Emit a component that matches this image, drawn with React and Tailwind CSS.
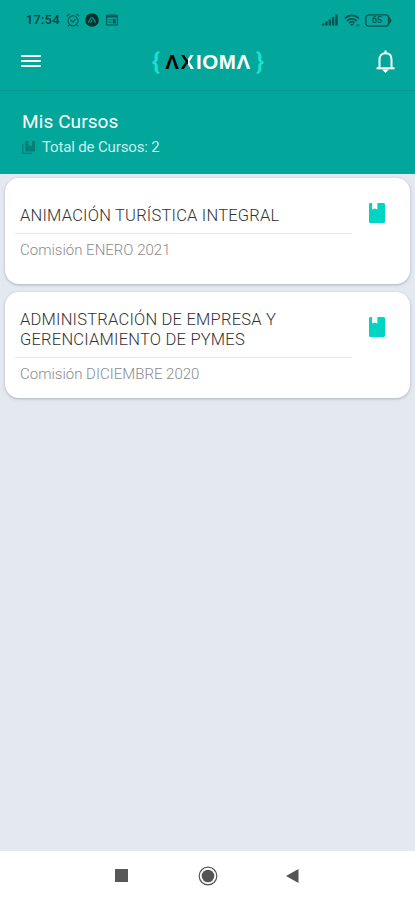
import React from 'react';

const courses = [
  {
    id: 1,
    title: ['ANIMACIÓN TURÍSTICA INTEGRAL'],
    commission: 'Comisión ENERO 2021',
  },
  {
    id: 2,
    title: ['ADMINISTRACIÓN DE EMPRESA Y', 'GERENCIAMIENTO DE PYMES'],
    commission: 'Comisión DICIEMBRE 2020',
  },
];

const BookIcon = () => (
  <svg className="w-4 h-5 text-[#00d5c5]" viewBox="0 0 16 20" fill="currentColor">
    <path d="M1.500 0H3v6.500l2.700-1L8.400 6.500V0h6.100A1.500 1.500 0 0 1 16 1.500v17a1.500 1.500 0 0 1-1.500 1.500h-13A1.500 1.500 0 0 1 0 18.500v-17A1.500 1.500 0 0 1 1.500 0z" />
  </svg>
);

const StatusBar = () => (
  <div className="flex h-10 items-center justify-between pl-[26px] pr-[23px] text-[#075450]">
    <div className="flex items-center">
      <span className="w-[35px] whitespace-nowrap text-[12.5px] font-medium tracking-[0.45px] text-[#073f3d]">17:54</span>
      {/* Alarm */}
      <svg className="ml-[5px] size-[14px]" viewBox="0 0 14 14" fill="none" stroke="currentColor" strokeWidth="1.1">
        <circle cx="7" cy="7.800" r="5" />
        <path d="M1 3.200 3.500 1M13 3.200 10.500 1M4.600 7l2.100 2 3-2.800M3 12l-1 1.300M11 12l1 1.300" />
      </svg>
      {/* App badge */}
      <svg className="ml-[5px] size-[14px]" viewBox="0 0 14 14">
        <circle cx="7" cy="7" r="6.800" fill="#063230" />
        <path d="M3.200 9.800C4.800 8.500 5 4.700 7 4.700s2.200 3.800 3.800 5.100M5.500 9.500 7 7.300" fill="none" stroke="#07998f" strokeWidth="1.200" />
      </svg>
      {/* Calendar */}
      <svg className="ml-[7px] h-[12px] w-[12px]" viewBox="0 0 12 12" fill="none" stroke="currentColor">
        <rect x="0.600" y="1" width="10.800" height="10" rx="1" strokeWidth="1.100" />
        <path d="M1 2.400h10" strokeWidth="2" />
        <path d="M2.500 5.700h3M2.500 8.200h3" strokeWidth="0.800" />
        <path d="M7 5.200h2.500v4H7z" fill="currentColor" strokeWidth="0.500" />
      </svg>
    </div>
    <div className="flex items-center">
      {/* Signal */}
      <svg className="h-[12px] w-[16px]" viewBox="0 0 16 12" fill="currentColor">
        <path d="M0 9.500h2.500V11.500H0zM3.300 7.500h2.400v4H3.300zM6.600 5.500H9v6H6.600zM9.900 3h2.400v8.500H9.900zM13.300 0.500h2.400v11h-2.400z" />
      </svg>
      {/* Wifi */}
      <svg className="ml-[6px] h-[13px] w-[16px]" viewBox="0 0 16 13" fill="none" stroke="currentColor" strokeWidth="1.700">
        <path d="M0.800 4.300a10 10 0 0 1 14 0M3 6.800a7 7 0 0 1 9.600 0M5.200 9a4 4 0 0 1 5.200 0" />
        <path d="m6 10 1.900 2L9.800 10z" fill="currentColor" stroke="none" />
        <path d="M13 10v2.500M14.800 10v2.500" strokeWidth="0.700" />
      </svg>
      {/* Battery */}
      <div className="relative ml-[5px] h-[13px] w-[27px]">
        <svg className="size-full" viewBox="0 0 27 13" fill="none" stroke="currentColor" strokeWidth="1.300">
          <rect x="0.800" y="0.800" width="22.800" height="11.400" rx="3" />
          <path d="M24.500 3.500q3 3 0 6z" fill="currentColor" strokeWidth="0.700" />
        </svg>
        <span className="absolute inset-y-0 left-0 w-6 text-center text-[9px] font-medium leading-[13px]">65</span>
      </div>
    </div>
  </div>
);

const Logo = () => (
  <div className="flex h-7 w-[112px] items-center justify-between font-bold leading-7">
    <span className="font-['Roboto',sans-serif] text-[24px] leading-[24px] text-[#1ee0cf]">{'{'}</span>
    <span className="-mx-1 flex gap-px whitespace-nowrap font-['Liberation_Sans',sans-serif] text-[20.5px] leading-7 tracking-[0.6px] text-white">
      <span className="text-black">Λ</span>
      <span className="bg-linear-to-r from-black from-50% to-white to-50% bg-clip-text text-transparent">X</span>
      <span>IOMΛ</span>
    </span>
    <span className="font-['Roboto',sans-serif] text-[24px] leading-[24px] text-[#1ee0cf]">{'}'}</span>
  </div>
);

const Header = () => (
  <div className="flex h-[51px] items-start justify-between border-b border-[#079a90] pl-[21px] pr-[20px]">
    <div className="mt-[15px] flex w-[20px] flex-col gap-[3px]">
      <div className="h-[2px] rounded-full bg-white" />
      <div className="h-[2px] rounded-full bg-white" />
      <div className="h-[2px] rounded-full bg-white" />
    </div>
    <div className="mr-[1px] mt-[8px]">
      <Logo />
    </div>
    <svg className="mt-[10px] h-[23px] w-[19px]" viewBox="0 0 19 23" fill="none" stroke="white" strokeWidth="2">
      <path d="M3.500 18V9.500C3.500 5.500 6 3.300 9.500 3.300s6 2.200 6 6.200V18" />
      <path d="M0.500 18.300h18" />
      <path d="M9.500 0.500v3M8.500 20.500h2l-1 1z" fill="white" />
    </svg>
  </div>
);

const CourseCard = ({ course }) => (
  <div className="flex h-[106px] rounded-[14px] bg-white pl-[10px] pr-[25px] shadow-[0_1px_3px_rgba(70,75,90,0.35)]">
    <div className={course.title.length > 1 ? 'w-[337px] pt-[18px]' : 'w-[337px] pt-[28px]'}>
      <div className="border-b border-[#e7e7e7] pb-[7px] pl-[5px] text-[16.5px] font-light leading-5 tracking-[0.22px] text-[#333]">
        {course.title.map((line) => (
          <div key={line} className="whitespace-nowrap">{line}</div>
        ))}
      </div>
      <div className="whitespace-nowrap pl-[5px] pt-[6px] text-[15px] font-light leading-5 text-[#8b8b8b]">
        {course.commission}
      </div>
    </div>
    <div className="ml-auto pt-[25px]">
      <BookIcon />
    </div>
  </div>
);

const NavigationBar = () => (
  <div className="flex h-[49px] items-center bg-white pl-[115px]">
    <div className="size-[13px] bg-[#585858]" />
    <svg className="ml-[70px] size-5" viewBox="0 0 20 20">
      <circle cx="10" cy="10" r="8.800" fill="none" stroke="#555" strokeWidth="1.200" />
      <circle cx="10" cy="10" r="6.300" fill="#555" />
    </svg>
    <svg className="ml-[68px] h-[14px] w-[13px]" viewBox="0 0 13 14" fill="#555">
      <path d="M0 7 12.500 0v14z" />
    </svg>
  </div>
);

export default function App() {
  return (
    <div className="flex h-[900px] w-[415px] flex-col overflow-hidden bg-[#e4e8f0] font-['Roboto',sans-serif]">
      <div className="h-[174px] bg-[#02a69b]">
        <StatusBar />
        <Header />
        <div className="pl-[22px] pt-[19px] text-white">
          <h1 className="whitespace-nowrap text-[19px] font-normal leading-6 tracking-[0.1px]">Mis Cursos</h1>
          <div className="flex h-[26px] items-center">
            <svg className="size-[13px] text-[#087e78]" viewBox="0 0 13 13" fill="currentColor">
              <path d="M4 0h2.500v5.500l1.800-1.200 1.700 1.200V0h2a1 1 0 0 1 1 1v8.500a1 1 0 0 1-1 1H4a1 1 0 0 1-1-1V1a1 1 0 0 1 1-1z" />
              <path d="M0 3h1.300v8.700H10V13H1a1 1 0 0 1-1-1z" />
            </svg>
            <span className="ml-[7px] whitespace-nowrap text-[15px] tracking-[-0.15px] text-[#c9f0ed]">Total de Cursos: 2</span>
          </div>
        </div>
      </div>
      <div className="flex flex-1 flex-col gap-[8px] px-[5px] pt-[4px]">
        {courses.map((course) => (
          <CourseCard key={course.id} course={course} />
        ))}
      </div>
      <NavigationBar />
    </div>
  );
}
